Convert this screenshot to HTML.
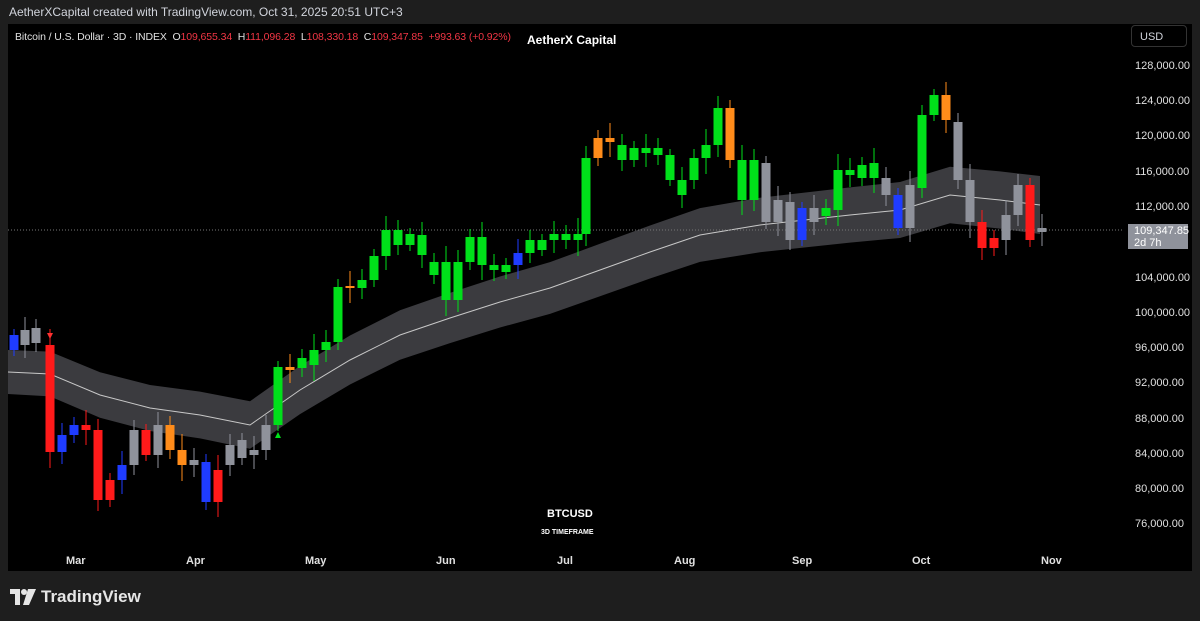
<!DOCTYPE html>
<html><head><meta charset="utf-8"><style>
body{margin:0;width:1200px;height:621px;background:#1e1e1e;overflow:hidden;font-family:"Liberation Sans",sans-serif;position:relative}
.cap{position:absolute;left:9px;top:5px;color:#d1d4dc;font-size:12px}
.panel{position:absolute;left:8px;top:24px;width:1184px;height:547px;background:#000}
.leg{position:absolute;left:15px;top:31px;font-size:10.5px;color:#e0e0e0;letter-spacing:-0.1px}
.leg span{color:#f23645}
.title{position:absolute;left:527px;top:33px;font-size:12px;color:#fff;font-weight:bold}
.usd{position:absolute;left:1131px;top:25px;width:56px;height:22px;border:1px solid #333;border-radius:4px;color:#d1d4dc;font-size:11px;line-height:22px;padding-left:8px;box-sizing:border-box}
.pl{position:absolute;left:1135px;font-size:11px;color:#e0e0e0}
.tl{position:absolute;top:555px;font-size:11px;color:#e0e0e0;font-weight:bold}
.logo{position:absolute;left:10px;top:587px;color:#e6e6e6;font-size:17px;font-weight:bold;display:flex;align-items:center;gap:5px}
</style></head><body>
<div class="cap">AetherXCapital created with TradingView.com, Oct 31, 2025 20:51 UTC+3</div>
<div class="panel"></div>
<svg id="c" width="1200" height="621" style="position:absolute;left:0;top:0"></svg>
<div class="leg">Bitcoin / U.S. Dollar · 3D · INDEX &nbsp;O<span>109,655.34</span> &nbsp;H<span>111,096.28</span> &nbsp;L<span>108,330.18</span> &nbsp;C<span>109,347.85 &nbsp;+993.63 (+0.92%)</span></div>
<div class="title">AetherX Capital</div>
<div class="usd">USD</div>
<div class="pl" style="top:60px">128,000.00</div>
<div class="pl" style="top:95px">124,000.00</div>
<div class="pl" style="top:130px">120,000.00</div>
<div class="pl" style="top:166px">116,000.00</div>
<div class="pl" style="top:201px">112,000.00</div>
<div style="position:absolute;left:1128px;top:224px;width:60px;height:25px;background:#8f929b;color:#fff;font-size:11px;line-height:12px;padding:1px 0 0 6px;box-sizing:border-box">109,347.85<br>2d 7h</div>
<div class="pl" style="top:272px">104,000.00</div>
<div class="pl" style="top:307px">100,000.00</div>
<div class="pl" style="top:342px">96,000.00</div>
<div class="pl" style="top:377px">92,000.00</div>
<div class="pl" style="top:413px">88,000.00</div>
<div class="pl" style="top:448px">84,000.00</div>
<div class="pl" style="top:483px">80,000.00</div>
<div class="pl" style="top:518px">76,000.00</div>
<div class="tl" style="left:66px">Mar</div><div class="tl" style="left:186px">Apr</div><div class="tl" style="left:305px">May</div><div class="tl" style="left:436px">Jun</div><div class="tl" style="left:557px">Jul</div><div class="tl" style="left:674px">Aug</div><div class="tl" style="left:792px">Sep</div><div class="tl" style="left:912px">Oct</div><div class="tl" style="left:1041px">Nov</div>
<div style="position:absolute;left:547px;top:508px;color:#fff;font-size:11px;font-weight:bold">BTCUSD</div>
<div style="position:absolute;left:541px;top:529px;color:#fff;font-size:7px;font-weight:bold">3D TIMEFRAME</div>
<div class="logo"><svg width="26" height="16" viewBox="0 0 26 16"><path d="M0 0h10v16H5V5H0z" fill="#e6e6e6"/><circle cx="14" cy="3" r="3" fill="#e6e6e6"/><path d="M18 0h8l-7 16h-6z" fill="#e6e6e6"/></svg>TradingView</div>
<script>
var s=document.getElementById('c'),h='';
var cl=[[8,372],[50,374],[100,395],[150,408],[200,415],[250,425],[300,390],[350,360],[400,335],[450,318],[500,302],[550,288],[600,270],[650,252],[700,235],[760,225],[850,215],[900,210],[950,195],[1000,200],[1040,205]];
var tp=[],bt=[],ln=[];
cl.forEach(function(p,i){var w=22+i*0.35;tp.push(p[0]+','+(p[1]-w));bt.unshift(p[0]+','+(p[1]+w));ln.push(p[0]+','+p[1]);});
h+='<polygon points="'+tp.join(' ')+' '+bt.join(' ')+'" fill="#3b3b3f"/>';
h+='<polyline points="'+ln.join(' ')+'" fill="none" stroke="#c8c8c8" stroke-width="1"/>';
h+='<line x1="8" y1="230" x2="1122" y2="230" stroke="#777" stroke-dasharray="1,2"/>';
var C={g:'#00e01a',r:'#ff1a1a',b:'#1f3cff',o:'#ff8c1a',y:'#8f929b'};
var d=[[14,335,350,'b'],[25,330,345,'y'],[36,328,343,'y'],[50,345,452,'r'],[62,435,452,'b'],[74,425,435,'b'],[86,425,430,'r'],[98,430,500,'r'],[110,480,500,'r'],[122,465,480,'b'],[134,430,465,'y'],[146,430,455,'r'],[158,425,455,'y'],[170,425,450,'o'],[182,450,465,'o'],[194,460,465,'y'],[206,462,502,'b'],[218,470,502,'r'],[230,445,465,'y'],[242,440,458,'y'],[254,450,455,'y'],[266,425,450,'y'],[278,367,425,'g'],[290,367,370,'o'],[302,358,368,'g'],[314,350,365,'g'],[326,342,350,'g'],[338,287,342,'g'],[350,286,288,'o'],[362,280,288,'g'],[374,256,280,'g'],[386,230,256,'g'],[398,230,245,'g'],[410,234,245,'g'],[422,235,255,'g'],[434,262,275,'g'],[446,262,300,'g'],[458,262,300,'g'],[470,237,262,'g'],[482,237,265,'g'],[494,265,270,'g'],[506,265,272,'g'],[518,253,265,'b'],[530,240,253,'g'],[542,240,250,'g'],[554,234,240,'g'],[566,234,240,'g'],[578,234,240,'g'],[586,158,234,'g'],[598,138,158,'o'],[610,138,142,'o'],[622,145,160,'g'],[634,148,160,'g'],[646,148,153,'g'],[658,148,155,'g'],[670,155,180,'g'],[682,180,195,'g'],[694,158,180,'g'],[706,145,158,'g'],[718,108,145,'g'],[730,108,160,'o'],[742,160,200,'g'],[754,160,200,'g'],[766,163,222,'y'],[778,200,222,'y'],[790,202,240,'y'],[802,208,240,'b'],[814,208,222,'y'],[826,208,216,'g'],[838,170,210,'g'],[850,170,175,'g'],[862,165,178,'g'],[874,163,178,'g'],[886,178,195,'y'],[898,195,228,'b'],[910,185,228,'y'],[922,115,188,'g'],[934,95,115,'g'],[946,95,120,'o'],[958,122,180,'y'],[970,180,222,'y'],[982,222,248,'r'],[994,238,248,'r'],[1006,215,240,'y'],[1018,185,215,'y'],[1030,185,240,'r'],[1042,228,232,'y']];
d.forEach(function(c,i){var col=C[c[3]],e=6+(i*7%11);h+='<line x1="'+c[0]+'" y1="'+(c[1]-e)+'" x2="'+c[0]+'" y2="'+(c[2]+e)+'" stroke="'+col+'" stroke-width="1"/>';h+='<rect x="'+(c[0]-4.5)+'" y="'+c[1]+'" width="9" height="'+Math.max(2,c[2]-c[1])+'" fill="'+col+'"/>';});
h+='<polygon points="275,438 281,438 278,432" fill="#00e01a"/><polygon points="47,333 53,333 50,339" fill="#ff3030"/>';
s.innerHTML=h;
</script>
</body></html>
